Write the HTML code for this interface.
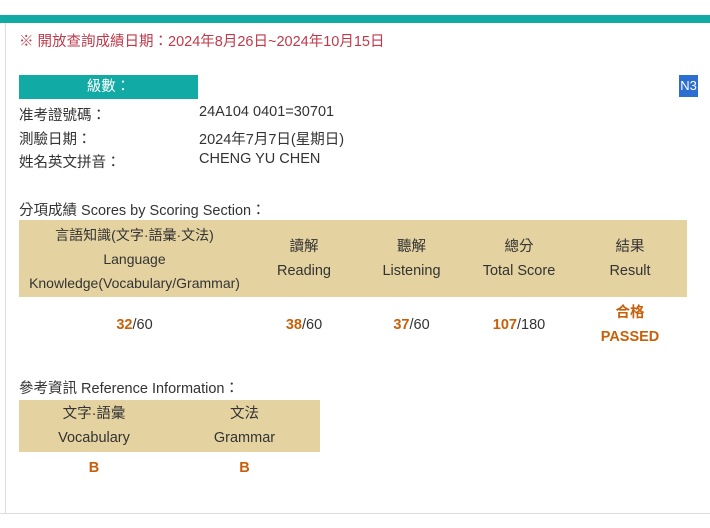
<!DOCTYPE html>
<html><head><meta charset="utf-8"><style>
body{margin:0;width:710px;height:528px;background:#fff;position:relative;overflow:hidden;font-family:"Liberation Sans","Noto Sans CJK TC",sans-serif;font-size:14.5px;color:#333}
.a{position:absolute;white-space:nowrap}
.top{position:absolute;left:0;top:15px;width:710px;height:8px;background:#11aaa5}
.lb{position:absolute;left:5px;top:23px;width:1px;height:490px;background:#ddd}
.bb{position:absolute;left:0;top:513px;width:710px;height:1px;background:#ddd}
.hd{position:absolute;background:#e4d3a1}
.c{position:absolute;text-align:center;line-height:24px;white-space:nowrap}
.o{color:#c8600a;font-weight:bold}
</style></head><body>
<div class="top"></div><div class="lb"></div><div class="bb"></div>
<div class="a" style="left:19px;top:30px;color:#c0394a">※ 開放查詢成績日期：2024年8月26日~2024年10月15日</div>
<div class="a" style="left:19px;top:75px;width:179px;height:24px;background:#11aaa5;color:#fff;text-align:center;line-height:24px">級數：</div>
<div class="a" style="left:679px;top:75px;width:19px;height:22px;background:#2d6fd0;color:#fff;text-align:center;line-height:22px;font-size:13px">N3</div>
<div class="a" style="left:19px;top:104px">准考證號碼：</div><div class="a" style="left:199px;top:104px">24A104 0401=30701</div>
<div class="a" style="left:19px;top:128px">測驗日期：</div><div class="a" style="left:199px;top:128px">2024年7月7日(星期日)</div>
<div class="a" style="left:19px;top:151px">姓名英文拼音：</div><div class="a" style="left:199px;top:151px">CHENG YU CHEN</div>
<div class="a" style="left:19px;top:199px">分項成績 Scores by Scoring Section：</div>
<div class="hd" style="left:19px;top:220px;width:668px;height:77px"></div>
<div class="c" style="left:19px;top:223px;width:231px;font-size:14px">言語知識(文字·語彙·文法)<br>Language<br>Knowledge(Vocabulary/Grammar)</div>
<div class="c" style="left:250px;top:235px;width:108px">讀解<br>Reading</div>
<div class="c" style="left:358px;top:235px;width:107px">聽解<br>Listening</div>
<div class="c" style="left:465px;top:235px;width:108px">總分<br>Total Score</div>
<div class="c" style="left:573px;top:235px;width:114px">結果<br>Result</div>
<div class="c" style="left:19px;top:313px;width:231px"><span class="o">32</span>/60</div>
<div class="c" style="left:250px;top:313px;width:108px"><span class="o">38</span>/60</div>
<div class="c" style="left:358px;top:313px;width:107px"><span class="o">37</span>/60</div>
<div class="c" style="left:465px;top:313px;width:108px"><span class="o">107</span>/180</div>
<div class="c o" style="left:573px;top:301px;width:114px">合格<br>PASSED</div>
<div class="a" style="left:19px;top:377px">參考資訊 Reference Information：</div>
<div class="hd" style="left:19px;top:400px;width:301px;height:52px"></div>
<div class="c" style="left:19px;top:402px;width:150px">文字·語彙<br>Vocabulary</div>
<div class="c" style="left:169px;top:402px;width:151px">文法<br>Grammar</div>
<div class="c o" style="left:19px;top:456px;width:150px">B</div>
<div class="c o" style="left:169px;top:456px;width:151px">B</div>
</body></html>
